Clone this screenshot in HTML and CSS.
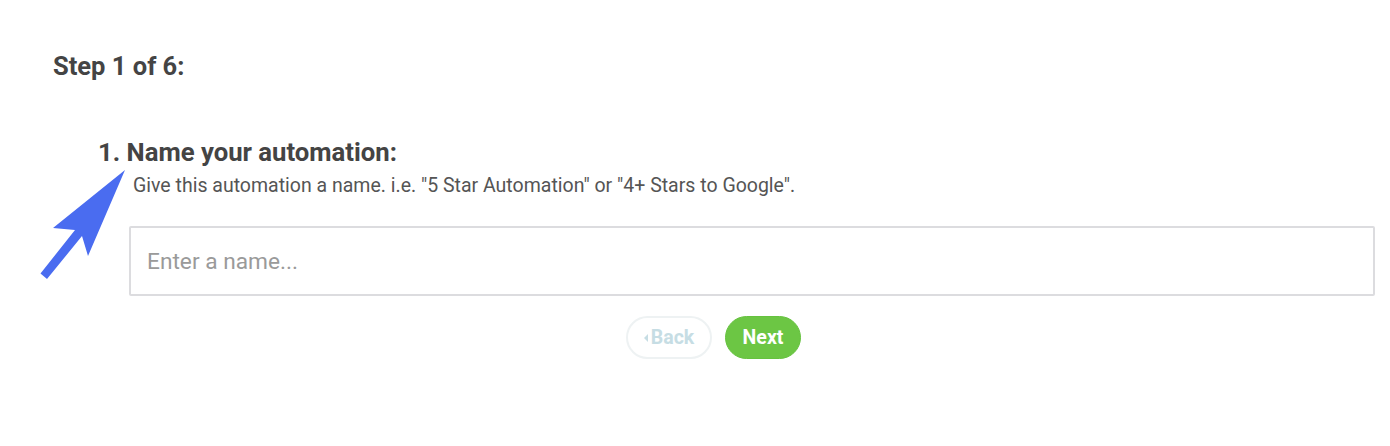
FILE: index.html
```html
<!DOCTYPE html>
<html>
<head>
<meta charset="utf-8">
<link rel="stylesheet" href="styles.css">
</head>
<body>
<div class="page">
  <h2 class="step">Step 1 of 6:</h2>
  <section class="question">
    <h3 class="q-title">1. Name your automation:</h3>
    <p class="q-help">Give this automation a name. i.e. "5 Star Automation" or "4+ Stars to Google".</p>
    <div class="field">
      <input class="name-input" type="text" placeholder="Enter a name...">
      <div class="actions">
        <button class="btn btn-back"><span class="caret"></span>Back</button>
        <button class="btn btn-next">Next</button>
      </div>
    </div>
  </section>
  <svg class="pointer" width="1390" height="446" viewBox="0 0 1390 446">
    <polygon fill="#4a6cf0" points="125,170 53,228 75,230 40.5,273.5 47,279 82,236 88,256"/>
  </svg>
</div>
</body>
</html>
```
FILE: styles.css
```css
* { box-sizing: border-box; }
html, body { margin: 0; background: #fff; }
body { font-family: Roboto, "Noto Sans", sans-serif; color: #444; }
.page { position: relative; width: 1390px; height: 446px; padding: 51px 0 0 53px; }
.step { margin: 0; font-size: 25.5px; font-weight: 700; line-height: 30px; color: #444; }
.question { margin: 55px 0 0 45px; }
.q-title { margin: 0; font-size: 25.7px; font-weight: 700; line-height: 32px; color: #444; }
.q-help { margin: 6px 0 0 35px; font-size: 19.5px; line-height: 24px; color: #555; }
.field { margin: 28px 0 0 31px; width: 1246px; }
.name-input { display: block; width: 100%; height: 70px; border: 2px solid #dcdcdf; border-radius: 2px; padding: 0 16px; font-family: Roboto, sans-serif; font-size: 22.7px; color: #333; outline: none; }
.name-input::placeholder { color: #9a9a9a; }
.actions { display: flex; gap: 13px; margin: 20px 0 0 497px; }
.btn { height: 43px; border-radius: 22px; font-family: Roboto, sans-serif; font-size: 19.5px; font-weight: 700; padding: 0; cursor: pointer; display: flex; align-items: center; justify-content: center; }
.btn-back { width: 86px; background: #fff; border: 2px solid #eef2f3; color: #c6dde4; }
.caret { width: 0; height: 0; border-top: 4px solid transparent; border-bottom: 4px solid transparent; border-right: 4px solid #c6dde4; margin-right: 3px; }
.btn-next { width: 76px; background: #6cc644; border: 1px solid #66c23f; color: #fff; }
.pointer { position: absolute; left: 0; top: 0; pointer-events: none; }
```
